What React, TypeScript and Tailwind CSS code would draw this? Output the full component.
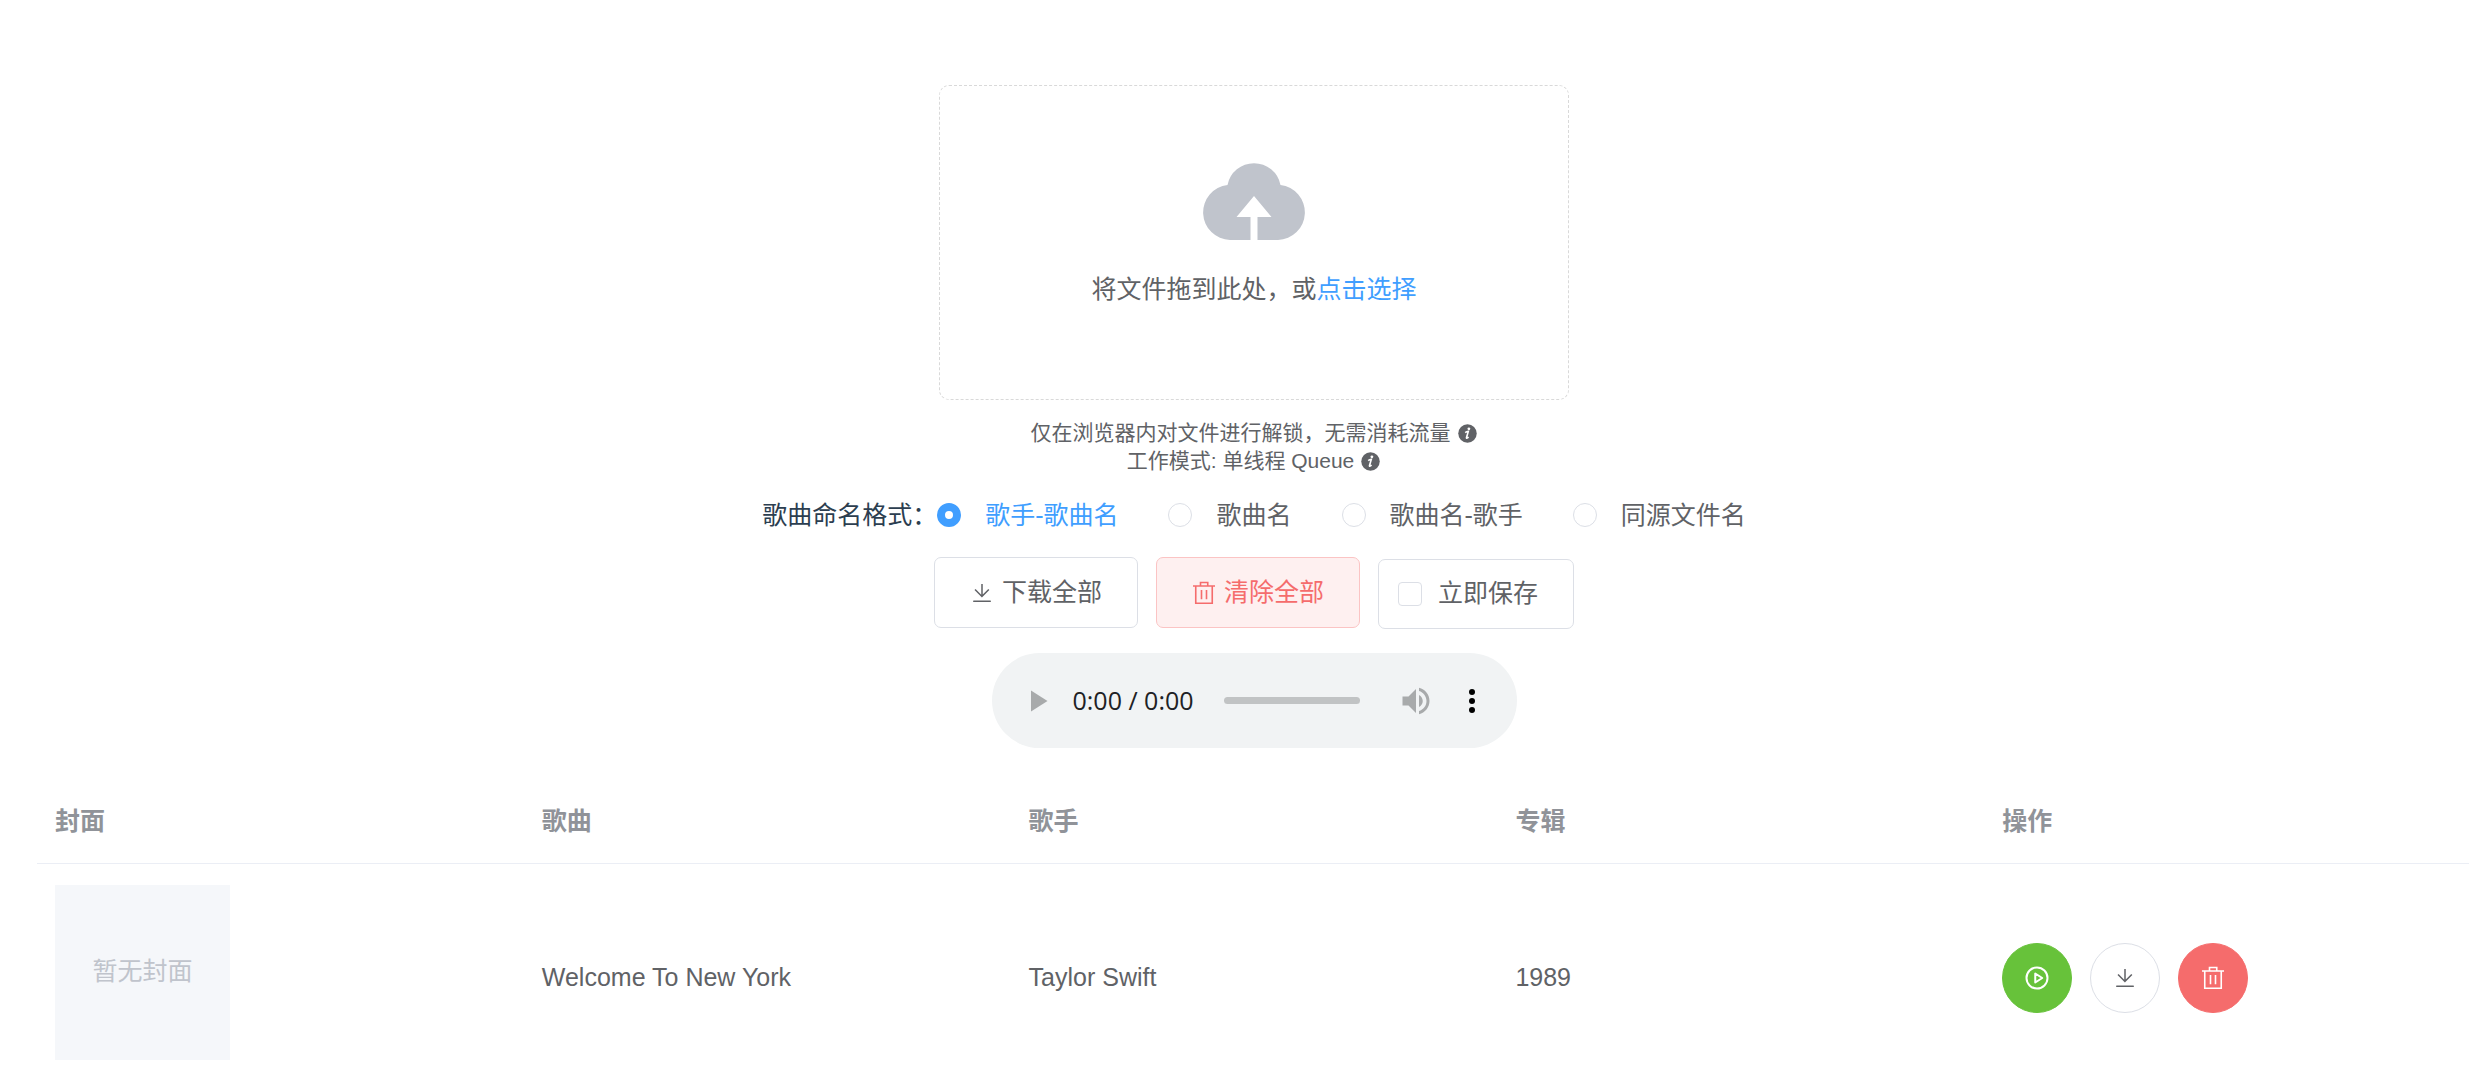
import type { ReactNode } from "react";

type IconProps = { className?: string };

function DownloadIcon({ className }: IconProps) {
  return (
    <svg viewBox="0 0 1024 1024" fill="currentColor" className={className} aria-hidden="true">
      <path d="M160 832h704a32 32 0 1 1 0 64H160a32 32 0 1 1 0-64m384-253.696 236.288-236.352 45.248 45.248L508.8 704 192 387.2l45.248-45.248L480 584.704V128h64z" />
    </svg>
  );
}

function TrashIcon({ className }: IconProps) {
  return (
    <svg viewBox="0 0 24 24" fill="none" stroke="currentColor" strokeWidth="1.6" className={className} aria-hidden="true">
      <path d="M1 5h22M3.75 5v17.25h16.5V5M8.5 5V1.5h7.25v3.5M9.5 9v9.25M14.5 9v9.25" />
    </svg>
  );
}

function PlayCircleIcon({ className }: IconProps) {
  return (
    <svg viewBox="0 0 24 24" fill="none" stroke="currentColor" strokeWidth="2" className={className} aria-hidden="true">
      <circle cx="12" cy="12" r="10.5" />
      <path d="M10.25 7.5v9l7-4.5z" strokeLinejoin="round" />
    </svg>
  );
}

function InfoIcon() {
  return (
    <svg viewBox="0 0 21 21" className="h-[21px] w-[21px]" aria-hidden="true">
      <circle cx="10.5" cy="10.5" r="9.25" fill="#606266" />
      <circle cx="11.9" cy="5.8" r="1.4" fill="#fff" />
      <path d="M8.2 9.7c1-.8 2-1.2 3.1-1.3l-1.8 6c-.2 1.1.6 1 2.1-.3" fill="none" stroke="#fff" strokeWidth="1.6" />
    </svg>
  );
}

function CloudUploadIcon() {
  return (
    <svg viewBox="0 0 104 78" className="h-[78px] w-[104px]" fill="#c0c4cc" aria-hidden="true">
      <path d="M25.5 23A27 27 0 0 1 78.5 23A27.6 27.6 0 0 1 76 78H55.5V55H69.5L52 34L34.5 55H48.5V78H28A27.6 27.6 0 0 1 25.5 23Z" />
    </svg>
  );
}

function NameFormat({ label, checked }: { label: string; checked?: boolean }) {
  return (
    <label className="flex cursor-pointer items-center gap-6 text-[#606266] has-checked:text-[#409eff]">
      <input
        type="radio"
        name="name-format"
        defaultChecked={checked}
        className="h-6 w-6 appearance-none rounded-full border border-[#dcdfe6] bg-white checked:border-8 checked:border-[#409eff]"
      />
      <span>{label}</span>
    </label>
  );
}

function Player() {
  return (
    <div className="mt-6 flex h-[95px] w-[525px] items-center rounded-full bg-[#f1f3f4] px-[27px]">
      <button type="button" aria-label="播放" className="text-[#a8aaab]">
        <svg viewBox="0 0 24 24" className="h-9 w-9" fill="currentColor" aria-hidden="true">
          <path d="M8 5v14l11-7z" />
        </svg>
      </button>
      <span className="ml-[18px] font-['Open_Sans',sans-serif] text-[25px] whitespace-nowrap text-[#202124]">0:00 / 0:00</span>
      <div className="ml-[30px] h-[7px] flex-1 rounded-full bg-[#c1c3c4]" role="progressbar" aria-label="播放进度" />
      <button type="button" aria-label="音量" className="ml-[38px] text-[#a8aaab]">
        <svg viewBox="0 0 24 24" className="h-9 w-9" fill="currentColor" aria-hidden="true">
          <path d="M3 9v6h4l5 5V4L7 9H3zm13.5 3c0-1.77-1.02-3.29-2.5-4.03v8.05c1.48-.73 2.5-2.25 2.5-4.02zM14 3.23v2.06c2.89.86 5 3.54 5 6.71s-2.11 5.85-5 6.71v2.06c4.01-.91 7-4.49 7-8.77s-2.99-7.86-7-8.77z" />
        </svg>
      </button>
      <button type="button" aria-label="更多选项" className="ml-5 text-black">
        <svg viewBox="0 0 24 24" className="h-9 w-9" fill="currentColor" aria-hidden="true">
          <circle cx="12" cy="6" r="2" />
          <circle cx="12" cy="12" r="2" />
          <circle cx="12" cy="18" r="2" />
        </svg>
      </button>
    </div>
  );
}

function RoundButton({ label, className, children }: { label: string; className: string; children: ReactNode }) {
  return (
    <button type="button" aria-label={label} className={`flex h-[70px] w-[70px] items-center justify-center rounded-full border ${className}`}>
      {children}
    </button>
  );
}

const columns = ["封面", "歌曲", "歌手", "专辑", "操作"];
const songs = [{ title: "Welcome To New York", artist: "Taylor Swift", album: "1989" }];

export default function App() {
  return (
    <div className="h-screen overflow-hidden bg-white font-['Liberation_Sans','Noto_Sans_CJK_SC',sans-serif] text-[25px] text-[#606266]">
      <main className="-mr-0.5 ml-[37px] flex flex-col items-center pt-[85px]">
        <div className="flex h-[315px] w-[630px] flex-col items-center rounded-[10px] border border-dashed border-[#d9d9d9] pt-[76px]">
          <CloudUploadIcon />
          <p className="mt-[29px] leading-10">
            将文件拖到此处，或
            <a href="#select" className="text-[#409eff]">点击选择</a>
          </p>
        </div>

        <div className="mt-[19px] text-[21px] leading-7">
          <p className="flex items-center justify-center gap-1.5">仅在浏览器内对文件进行解锁，无需消耗流量 <InfoIcon /></p>
          <p className="flex items-center justify-center gap-1.5">工作模式: 单线程 Queue <InfoIcon /></p>
        </div>

        <div role="radiogroup" aria-labelledby="name-format-label" className="mt-5 flex items-center leading-10">
          <span id="name-format-label" className="text-[#2c3e50]">歌曲命名格式：</span>
          <div className="flex gap-[50px]">
            <NameFormat label="歌手-歌曲名" checked />
            <NameFormat label="歌曲名" />
            <NameFormat label="歌曲名-歌手" />
            <NameFormat label="同源文件名" />
          </div>
        </div>

        <div className="mt-[22px] flex items-end gap-[18px]">
          <button type="button" className="mb-px flex h-[71px] items-center gap-2 rounded-[7px] border border-[#dcdfe6] px-[35px]">
            <DownloadIcon className="h-6 w-6" />
            下载全部
          </button>
          <button type="button" className="mb-px flex h-[71px] items-center gap-2 rounded-[7px] border border-[#fbc4c4] bg-[#fef0f0] px-[35px] text-[#f56c6c]">
            <TrashIcon className="h-6 w-6" />
            清除全部
          </button>
          <label className="flex h-[70px] cursor-pointer items-center gap-4 rounded-[7px] border border-[#dcdfe6] pr-[35px] pl-[19px]">
            <input type="checkbox" className="h-6 w-6 appearance-none rounded border border-[#dcdfe6] bg-white checked:bg-[#409eff]" />
            <span>立即保存</span>
          </label>
        </div>

        <Player />

        <table className="mt-7 w-full table-fixed border-collapse text-left">
          <thead>
            <tr className="h-[87px] border-b border-[#ebeef5] text-[#909399]">
              {columns.map((name) => (
                <th key={name} scope="col" className="px-[18px] pt-1 font-bold">{name}</th>
              ))}
            </tr>
          </thead>
          <tbody>
            {songs.map((song) => (
              <tr key={song.title} className="h-[230px] border-b border-[#ebeef5]">
                <td className="px-[18px] pt-[21px] align-top">
                  <div className="flex h-[175px] w-[175px] items-center justify-center bg-[#f5f7fa] text-[#c0c4cc]">暂无封面</div>
                </td>
                <td className="px-[18px]">{song.title}</td>
                <td className="px-[18px]">{song.artist}</td>
                <td className="px-[18px]">{song.album}</td>
                <td className="px-[18px]">
                  <div className="flex gap-[18px]">
                    <RoundButton label="播放" className="border-[#67c23a] bg-[#67c23a] text-white">
                      <PlayCircleIcon className="h-6 w-6" />
                    </RoundButton>
                    <RoundButton label="下载" className="border-[#dcdfe6] bg-white text-[#606266]">
                      <DownloadIcon className="h-6 w-6" />
                    </RoundButton>
                    <RoundButton label="删除" className="border-[#f56c6c] bg-[#f56c6c] text-white">
                      <TrashIcon className="h-6 w-6" />
                    </RoundButton>
                  </div>
                </td>
              </tr>
            ))}
          </tbody>
        </table>
      </main>
    </div>
  );
}
